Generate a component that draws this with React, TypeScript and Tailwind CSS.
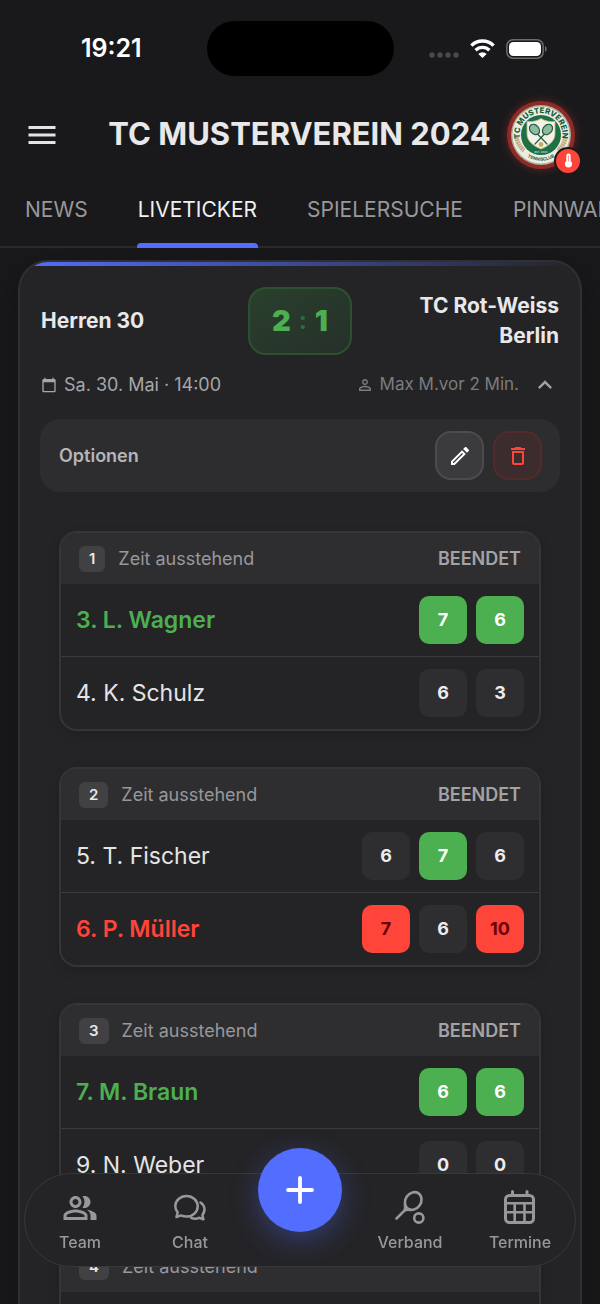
import type { ReactNode } from "react";
import {
  MdCalendarToday,
  MdDeleteOutline,
  MdKeyboardArrowUp,
  MdMenu,
  MdOutlineEdit,
  MdOutlinePeopleAlt,
  MdPersonOutline,
} from "react-icons/md";

type Result = "win" | "loss" | "none";

interface SetScore {
  value: number;
  result: Result;
}

interface Player {
  name: string;
  result: Result;
  sets: SetScore[];
}

interface Match {
  id: number;
  finished: boolean;
  players: Player[];
}

const none = (value: number): SetScore => ({ value, result: "none" });
const win = (value: number): SetScore => ({ value, result: "win" });
const loss = (value: number): SetScore => ({ value, result: "loss" });

const matches: Match[] = [
  {
    id: 1,
    finished: true,
    players: [
      { name: "3. L. Wagner", result: "win", sets: [win(7), win(6)] },
      { name: "4. K. Schulz", result: "none", sets: [none(6), none(3)] },
    ],
  },
  {
    id: 2,
    finished: true,
    players: [
      { name: "5. T. Fischer", result: "none", sets: [none(6), win(7), none(6)] },
      { name: "6. P. Müller", result: "loss", sets: [loss(7), none(6), loss(10)] },
    ],
  },
  {
    id: 3,
    finished: true,
    players: [
      { name: "7. M. Braun", result: "win", sets: [win(6), win(6)] },
      { name: "9. N. Weber", result: "none", sets: [none(0), none(0)] },
    ],
  },
  {
    id: 4,
    finished: false,
    players: [],
  },
];

const tabs = ["NEWS", "LIVETICKER", "SPIELERSUCHE", "PINNWAND"];

const nameStyles: Record<Result, string> = {
  win: "font-semibold text-[#4caf50]",
  loss: "font-semibold text-[#ff453a]",
  none: "text-[#e4e4e6]",
};

const setStyles: Record<Result, string> = {
  win: "bg-[#4caf50] text-white",
  loss: "bg-[#ff453a] text-[#690005]",
  none: "bg-[#2e2e30] text-[#ececee]",
};

function StatusBar() {
  return (
    <div className="grid h-[97px] grid-cols-[1fr_187px_1fr] items-center">
      <div className="pl-4 text-center text-[25px] font-semibold text-white">19:21</div>
      <div className="h-[55px] rounded-full bg-black" />
      <div className="flex items-center justify-end gap-[11px] pr-[53px]">
        <svg className="mt-3 h-[6px] w-[30px]" viewBox="0 0 30 6" fill="#4a4a4c">
          <circle cx="3" cy="3" r="2.7" />
          <circle cx="11" cy="3" r="2.7" />
          <circle cx="19" cy="3" r="2.7" />
          <circle cx="27" cy="3" r="2.7" />
        </svg>
        <svg className="h-[19px] w-[25px]" viewBox="0 0 25 19" fill="none" stroke="#fff" strokeWidth="3.4">
          <path d="M1.4 6.6a15.8 15.8 0 0 1 22.2 0" />
          <path d="M5.6 11.2a9.8 9.8 0 0 1 13.8 0" />
          <path d="M12.5 19 8.3 14.9a6 6 0 0 1 8.4 0z" fill="#fff" stroke="none" />
        </svg>
        <svg className="h-[20px] w-[41px]" viewBox="0 0 41 20" fill="none">
          <rect x="0.8" y="0.8" width="36.4" height="18.4" rx="6.2" stroke="#6c6c6e" strokeWidth="1.5" />
          <rect x="3" y="3" width="32" height="14" rx="4.4" fill="#fff" />
          <path d="M39 7c2.2.8 2.2 5.2 0 6z" fill="#6c6c6e" />
        </svg>
      </div>
    </div>
  );
}

function ClubLogo() {
  return (
    <div className="relative size-[68px] rounded-full bg-[#8f2a26] p-1 shadow-[0_0_10px_rgba(255,69,58,0.3)]">
      <svg className="size-full" viewBox="0 0 60 60">
        <defs>
          <path id="name-arc" d="M10.7 38.5A21.3 21.3 0 1 1 49.3 38.5" />
          <path id="club-arc" d="M12 48.5A26 26 0 0 0 48 48.5" />
        </defs>
        <circle cx="30" cy="30" r="30" fill="#a9b09a" />
        <circle cx="30" cy="30" r="28.5" fill="#ecece4" />
        <circle cx="30" cy="30" r="20" fill="#1c7044" />
        <path d="M30 13.5c4 2.6 9 3.5 14 3v12.500c0 7-6.500 12-14 15-7.500-3-14-8-14-15V16.500c5 .5 10-.4 14-3z" fill="#f3f1e8" stroke="#c9b98a" strokeWidth="0.8" />
        <g stroke="#1f5f41" strokeWidth="1.2" fill="#8fb9a1">
          <path d="M26 28.500 36 39M34 28.500 24 39" strokeLinecap="round" />
          <ellipse cx="23.5" cy="24.5" rx="4.4" ry="5.8" transform="rotate(-42 23.5 24.5)" />
          <ellipse cx="36.5" cy="24.5" rx="4.4" ry="5.8" transform="rotate(42 36.5 24.5)" />
        </g>
        <circle cx="30" cy="39.500" r="2.4" fill="#c8a867" />
        <g fill="none" stroke="#c2a77a" strokeWidth="4.5" strokeDasharray="1.8 0.6">
          <path d="M5.5 32c.8 6 3.500 10 7.500 13.500" />
          <path d="M54.5 32c-.8 6-3.500 10-7.500 13.500" />
        </g>
        <text className="font-extrabold" fontSize="7.8" fill="#17603a" textAnchor="middle">
          <textPath href="#name-arc" startOffset="50%">TC MUSTERVEREIN</textPath>
        </text>
        <text className="font-bold" fontSize="4.4" fill="#17603a" textAnchor="middle">
          <textPath href="#club-arc" startOffset="50%">TENNISCLUB</textPath>
        </text>
        <text className="font-semibold" x="30" y="47.5" fontSize="2.6" fill="#d7e5dc" textAnchor="middle">EST. 2024</text>
      </svg>
      <span className="absolute -right-[5px] -bottom-1 flex size-6 items-center justify-center rounded-full bg-[#ff453a] shadow-[0_0_0_2px_#19191b]">
        <svg className="h-[15px] w-[9px]" viewBox="0 0 9 15">
          <path d="M4.5.5A2.2 2.2 0 0 0 2.3 2.7v5.4a3.6 3.6 0 1 0 4.4 0V2.7A2.2 2.2 0 0 0 4.5.5z" fill="#fff" />
          <path d="M4.5 2.5v6" stroke="#ff9a93" strokeWidth="1" />
        </svg>
      </span>
    </div>
  );
}

function Header() {
  return (
    <header className="grid h-[75px] grid-cols-[68px_1fr_68px] items-center pr-[25px] pl-6">
      <button type="button" aria-label="Menü" className="text-[#e4e4e6]">
        <MdMenu size={36} />
      </button>
      <h1 className="text-center text-[31px] font-bold whitespace-nowrap text-[#e8e8ea]">
        TC MUSTERVEREIN 2024
      </h1>
      <ClubLogo />
    </header>
  );
}

function Tabs() {
  return (
    <nav className="flex h-[76px] shrink-0 overflow-hidden shadow-[inset_0_-2px_0_#29292b]">
      {tabs.map((tab) => {
        const active = tab === "LIVETICKER";
        return (
          <a
            key={tab}
            href="#"
            className={`relative flex shrink-0 items-center px-[25px] text-[21px] ${active ? "text-[#f0f0f2]" : "text-[#98989b]"}`}
          >
            {tab}
            {active && <span className="absolute inset-x-6 bottom-0 h-[5px] rounded-t-sm bg-[#536dfe]" />}
          </a>
        );
      })}
    </nav>
  );
}

function MatchCard({ match }: { match: Match }) {
  return (
    <section className="overflow-hidden rounded-[18px] border-2 border-[#353538] bg-[#242426] shadow-[0_4px_12px_rgba(0,0,0,0.15)]">
      <div className="flex h-[51px] items-center justify-between bg-[#2e2e30] px-[18px]">
        <div className="flex items-center gap-[13px]">
          <span className="rounded-md bg-[#414143] px-[10px] text-[15px] leading-[26px] font-semibold text-[#e8e8ea]">
            {match.id}
          </span>
          <span className="text-lg text-[#98989b]">Zeit ausstehend</span>
        </div>
        {match.finished && <span className="text-lg font-semibold text-[#a3a3a6]">BEENDET</span>}
      </div>
      <div className="min-h-36 divide-y divide-[#3a3a3d]">
        {match.players.map((player) => (
          <div key={player.name} className="flex items-center justify-between px-[15px] py-3">
            <span className={`text-[23px] ${nameStyles[player.result]}`}>{player.name}</span>
            <div className="flex gap-[9px]">
              {player.sets.map((set, i) => (
                <span
                  key={i}
                  className={`flex size-12 items-center justify-center rounded-[10px] text-lg font-bold ${setStyles[set.result]}`}
                >
                  {set.value}
                </span>
              ))}
            </div>
          </div>
        ))}
      </div>
    </section>
  );
}

function EncounterCard() {
  return (
    <article className="relative overflow-hidden rounded-[30px] border-2 border-[#303032] bg-[#242426] px-5 pt-[25px] shadow-[0_8px_32px_rgba(0,0,0,0.3)]">
      {/* Accent line */}
      <div className="absolute inset-x-0 top-0 h-1 bg-linear-to-r from-[#536dfe] to-transparent" />

      <div className="grid grid-cols-[1fr_104px_1fr] items-center px-[1px]">
        <h2 className="text-[21px] font-bold text-[#e8e8ea]">Herren 30</h2>
        <div className="flex h-[68px] items-center justify-center gap-2 rounded-[18px] border-2 border-[#2d5032] bg-linear-to-br from-[#29402c] to-[#26302a] text-[29px] font-black text-[#4caf50]">
          <span>2</span>
          <span className="text-2xl font-bold text-[#2d6a46]">:</span>
          <span>1</span>
        </div>
        <h2 className="pl-10 text-right text-[21px] leading-[30px] font-bold text-[#e8e8ea]">TC Rot-Weiss Berlin</h2>
      </div>

      <div className="mt-[18px] flex h-6 items-center justify-between px-[1px] text-[#a6a6a9]">
        <div className="flex items-center gap-[7px] text-lg">
          <MdCalendarToday size={16} />
          Sa. 30. Mai · 14:00
        </div>
        <div className="flex items-center text-[17px] text-[#7c7c7f]">
          <MdPersonOutline size={18} className="mr-[6px]" />
          <span>Max M.</span>
          <span>vor 2 Min.</span>
          <button type="button" aria-label="Einklappen" className="ml-3 text-[#a0a0a3]">
            <MdKeyboardArrowUp size={28} />
          </button>
        </div>
      </div>

      <div className="mt-[22px] flex h-[73px] items-center justify-between rounded-[20px] bg-[#2d2d2f] pr-[18px] pl-[19px]">
        <span className="text-lg font-semibold text-[#b6b6b9]">Optionen</span>
        <div className="flex gap-[9px]">
          <button
            type="button"
            aria-label="Bearbeiten"
            className="flex size-[49px] items-center justify-center rounded-2xl border-2 border-[#4c4c4f] bg-[#3b3b3d] text-white"
          >
            <MdOutlineEdit size={24} />
          </button>
          <button
            type="button"
            aria-label="Löschen"
            className="flex size-[49px] items-center justify-center rounded-2xl border-2 border-[#562a2b] bg-[#3d2c2e] text-[#ff453a]"
          >
            <MdDeleteOutline size={24} />
          </button>
        </div>
      </div>

      <div className="mt-[39px] flex flex-col gap-9 px-[19px]">
        {matches.map((match) => (
          <MatchCard key={match.id} match={match} />
        ))}
      </div>
    </article>
  );
}

function NavItem({ label, children }: { label: string; children: ReactNode }) {
  return (
    <a href="#" className="flex flex-col items-center gap-1 pt-1 text-base font-medium text-[#98989b]">
      {children}
      <span>{label}</span>
    </a>
  );
}

function BottomNav() {
  return (
    <nav className="fixed inset-x-6 bottom-[37px] grid h-[94px] grid-cols-5 items-center rounded-full border border-[#38383b] bg-[#242427]">
      <NavItem label="Team">
        <MdOutlinePeopleAlt size={36} />
      </NavItem>
      <NavItem label="Chat">
        <svg className="size-9" viewBox="0 0 36 36" fill="none" stroke="currentColor" strokeWidth="2.5" strokeLinecap="round" strokeLinejoin="round">
          <path d="M14.5 6c6.2 0 11.2 4.6 11.2 10.3S20.7 26.6 14.5 26.6c-2 0-3.8-.4-5.4-1.2L4.5 27l1.2-4.7c-1.5-1.7-2.4-3.7-2.4-6C3.3 10.6 8.3 6 14.5 6z" />
          <path d="M28.5 12.5c4.6 3 5.2 8.5 1.9 12.5l1 4.3-4.4-1.5c-2.6 1.2-5.4 1-7.8.1" />
        </svg>
      </NavItem>
      <div className="flex -translate-y-[30px] justify-center">
        <button
          type="button"
          aria-label="Hinzufügen"
          className="flex size-[84px] items-center justify-center rounded-full bg-[#536dfe] shadow-[0_8px_28px_rgba(83,109,254,0.35)]"
        >
          <svg className="size-7" viewBox="0 0 28 28" stroke="#fff" strokeWidth="3.8" strokeLinecap="round">
            <path d="M14 2v24M2 14h24" />
          </svg>
        </button>
      </div>
      <NavItem label="Verband">
        <svg className="size-9" viewBox="0 0 36 36" fill="none" stroke="currentColor" strokeWidth="2.6" strokeLinecap="round" strokeLinejoin="round">
          <ellipse cx="21.2" cy="11" rx="7.8" ry="9.3" transform="rotate(35 21.2 11)" />
          <path d="M13 15c.5 2.5.2 4.5-.8 5.8L4.5 28.5M12.2 20.8c1.5-1 3.3-1.4 6-.9" />
          <circle cx="26.8" cy="28" r="4.6" />
        </svg>
      </NavItem>
      <NavItem label="Termine">
        <svg className="size-9" viewBox="0 0 36 36" fill="none" stroke="currentColor" strokeWidth="3" strokeLinecap="round">
          <rect x="3.5" y="5.5" width="28" height="27" rx="4" />
          <path d="M10.5 1.5v4M25 1.5v4" />
          <path d="M3.5 13.2h28M3.5 22.3h28M12.7 13.2v19.3M22.5 13.2v19.3" strokeWidth="2.6" />
        </svg>
      </NavItem>
    </nav>
  );
}

export default function App() {
  return (
    <div className="flex h-screen flex-col overflow-hidden bg-[#19191b] font-['Inter',sans-serif]">
      <StatusBar />
      <Header />
      <Tabs />
      <main className="min-h-0 flex-1 overflow-hidden px-[18px] pt-3">
        <EncounterCard />
      </main>
      <BottomNav />
    </div>
  );
}
